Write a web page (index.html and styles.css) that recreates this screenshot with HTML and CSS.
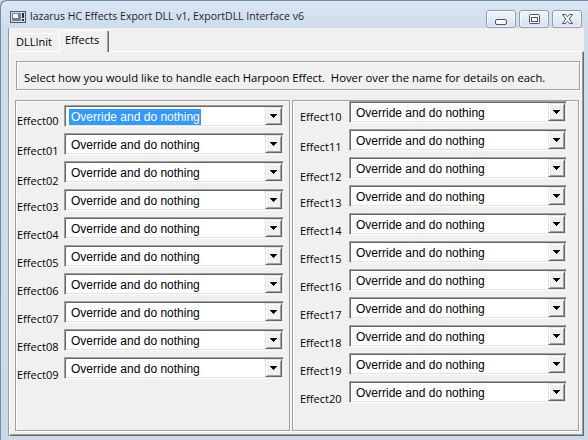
FILE: index.html
```html
<!DOCTYPE html>
<html>
<head>
<meta charset="utf-8">
<link rel="stylesheet" href="styles.css">
</head>
<body>
<div class="window">
  <div class="titlebar">
    <svg class="appicon" width="16" height="12" viewBox="0 0 16 12">
      <rect x="0.5" y="0.5" width="15" height="11" fill="#d7dee6" stroke="#4d5866"/>
      <rect x="2" y="2" width="9" height="8" fill="#6d8297"/>
      <rect x="3" y="3" width="5" height="4" fill="#f4f6f8"/>
      <rect x="12" y="2" width="2" height="5" fill="#27313c"/>
      <rect x="12" y="8" width="2" height="2" fill="#27313c"/>
    </svg>
    <span class="title">lazarus HC Effects Export DLL v1, ExportDLL Interface v6</span>
    <div class="capbtns">
      <div class="capbtn">
        <svg width="12" height="6" viewBox="0 0 12 6"><rect x="0.5" y="0.5" width="11" height="5" rx="1.5" fill="#fff" stroke="#45566b"/></svg>
      </div>
      <div class="capbtn">
        <svg width="11" height="10" viewBox="0 0 11 10"><rect x="0.5" y="0.5" width="10" height="9" rx="1" fill="#fff" stroke="#45566b"/><rect x="2.5" y="3.5" width="6" height="4" fill="#fff" stroke="#45566b"/></svg>
      </div>
      <div class="capbtn">
        <svg width="11" height="10" viewBox="0 0 11 10"><path d="M0.5 0.5h3l2 2.2 2-2.2h3l-3.3 4.5 3.3 4.5h-3l-2-2.2-2 2.2h-3l3.3-4.5z" fill="#fff" stroke="#45566b" stroke-linejoin="round"/></svg>
      </div>
    </div>
  </div>
  <div class="client">
    <div class="tabs">
      <div class="tab">DLLInit</div>
      <div class="tab active">Effects</div>
    </div>
    <div class="page">
      <div class="info">Select how you would like to handle each Harpoon Effect.&nbsp; Hover over the name for details on each.</div>
      <div class="groups">
        <div class="group gleft">
          <div class="row"><span class="lbl hi">Effect00</span><div class="combo"><span class="val"><span class="txt sel">Override and do nothing</span></span><span class="dd"><svg width="7" height="4" viewBox="0 0 7 4"><path d="M0 0h7v1h-7zM1 1h5v1h-5zM2 2h3v1h-3zM3 3h1v1h-1z"/></svg></span></div></div>
          <div class="row"><span class="lbl">Effect01</span><div class="combo"><span class="val"><span class="txt">Override and do nothing</span></span><span class="dd"><svg width="7" height="4" viewBox="0 0 7 4"><path d="M0 0h7v1h-7zM1 1h5v1h-5zM2 2h3v1h-3zM3 3h1v1h-1z"/></svg></span></div></div>
          <div class="row"><span class="lbl lo">Effect02</span><div class="combo"><span class="val"><span class="txt">Override and do nothing</span></span><span class="dd"><svg width="7" height="4" viewBox="0 0 7 4"><path d="M0 0h7v1h-7zM1 1h5v1h-5zM2 2h3v1h-3zM3 3h1v1h-1z"/></svg></span></div></div>
          <div class="row"><span class="lbl">Effect03</span><div class="combo"><span class="val"><span class="txt">Override and do nothing</span></span><span class="dd"><svg width="7" height="4" viewBox="0 0 7 4"><path d="M0 0h7v1h-7zM1 1h5v1h-5zM2 2h3v1h-3zM3 3h1v1h-1z"/></svg></span></div></div>
          <div class="row"><span class="lbl">Effect04</span><div class="combo"><span class="val"><span class="txt">Override and do nothing</span></span><span class="dd"><svg width="7" height="4" viewBox="0 0 7 4"><path d="M0 0h7v1h-7zM1 1h5v1h-5zM2 2h3v1h-3zM3 3h1v1h-1z"/></svg></span></div></div>
          <div class="row"><span class="lbl">Effect05</span><div class="combo"><span class="val"><span class="txt">Override and do nothing</span></span><span class="dd"><svg width="7" height="4" viewBox="0 0 7 4"><path d="M0 0h7v1h-7zM1 1h5v1h-5zM2 2h3v1h-3zM3 3h1v1h-1z"/></svg></span></div></div>
          <div class="row"><span class="lbl">Effect06</span><div class="combo"><span class="val"><span class="txt">Override and do nothing</span></span><span class="dd"><svg width="7" height="4" viewBox="0 0 7 4"><path d="M0 0h7v1h-7zM1 1h5v1h-5zM2 2h3v1h-3zM3 3h1v1h-1z"/></svg></span></div></div>
          <div class="row"><span class="lbl">Effect07</span><div class="combo"><span class="val"><span class="txt">Override and do nothing</span></span><span class="dd"><svg width="7" height="4" viewBox="0 0 7 4"><path d="M0 0h7v1h-7zM1 1h5v1h-5zM2 2h3v1h-3zM3 3h1v1h-1z"/></svg></span></div></div>
          <div class="row"><span class="lbl">Effect08</span><div class="combo"><span class="val"><span class="txt">Override and do nothing</span></span><span class="dd"><svg width="7" height="4" viewBox="0 0 7 4"><path d="M0 0h7v1h-7zM1 1h5v1h-5zM2 2h3v1h-3zM3 3h1v1h-1z"/></svg></span></div></div>
          <div class="row"><span class="lbl">Effect09</span><div class="combo"><span class="val"><span class="txt">Override and do nothing</span></span><span class="dd"><svg width="7" height="4" viewBox="0 0 7 4"><path d="M0 0h7v1h-7zM1 1h5v1h-5zM2 2h3v1h-3zM3 3h1v1h-1z"/></svg></span></div></div>
        </div>
        <div class="group gright">
          <div class="row"><span class="lbl hi">Effect10</span><div class="combo"><span class="val"><span class="txt">Override and do nothing</span></span><span class="dd"><svg width="7" height="4" viewBox="0 0 7 4"><path d="M0 0h7v1h-7zM1 1h5v1h-5zM2 2h3v1h-3zM3 3h1v1h-1z"/></svg></span></div></div>
          <div class="row"><span class="lbl">Effect11</span><div class="combo"><span class="val"><span class="txt">Override and do nothing</span></span><span class="dd"><svg width="7" height="4" viewBox="0 0 7 4"><path d="M0 0h7v1h-7zM1 1h5v1h-5zM2 2h3v1h-3zM3 3h1v1h-1z"/></svg></span></div></div>
          <div class="row"><span class="lbl lo">Effect12</span><div class="combo"><span class="val"><span class="txt">Override and do nothing</span></span><span class="dd"><svg width="7" height="4" viewBox="0 0 7 4"><path d="M0 0h7v1h-7zM1 1h5v1h-5zM2 2h3v1h-3zM3 3h1v1h-1z"/></svg></span></div></div>
          <div class="row"><span class="lbl">Effect13</span><div class="combo"><span class="val"><span class="txt">Override and do nothing</span></span><span class="dd"><svg width="7" height="4" viewBox="0 0 7 4"><path d="M0 0h7v1h-7zM1 1h5v1h-5zM2 2h3v1h-3zM3 3h1v1h-1z"/></svg></span></div></div>
          <div class="row"><span class="lbl">Effect14</span><div class="combo"><span class="val"><span class="txt">Override and do nothing</span></span><span class="dd"><svg width="7" height="4" viewBox="0 0 7 4"><path d="M0 0h7v1h-7zM1 1h5v1h-5zM2 2h3v1h-3zM3 3h1v1h-1z"/></svg></span></div></div>
          <div class="row"><span class="lbl">Effect15</span><div class="combo"><span class="val"><span class="txt">Override and do nothing</span></span><span class="dd"><svg width="7" height="4" viewBox="0 0 7 4"><path d="M0 0h7v1h-7zM1 1h5v1h-5zM2 2h3v1h-3zM3 3h1v1h-1z"/></svg></span></div></div>
          <div class="row"><span class="lbl">Effect16</span><div class="combo"><span class="val"><span class="txt">Override and do nothing</span></span><span class="dd"><svg width="7" height="4" viewBox="0 0 7 4"><path d="M0 0h7v1h-7zM1 1h5v1h-5zM2 2h3v1h-3zM3 3h1v1h-1z"/></svg></span></div></div>
          <div class="row"><span class="lbl">Effect17</span><div class="combo"><span class="val"><span class="txt">Override and do nothing</span></span><span class="dd"><svg width="7" height="4" viewBox="0 0 7 4"><path d="M0 0h7v1h-7zM1 1h5v1h-5zM2 2h3v1h-3zM3 3h1v1h-1z"/></svg></span></div></div>
          <div class="row"><span class="lbl">Effect18</span><div class="combo"><span class="val"><span class="txt">Override and do nothing</span></span><span class="dd"><svg width="7" height="4" viewBox="0 0 7 4"><path d="M0 0h7v1h-7zM1 1h5v1h-5zM2 2h3v1h-3zM3 3h1v1h-1z"/></svg></span></div></div>
          <div class="row"><span class="lbl">Effect19</span><div class="combo"><span class="val"><span class="txt">Override and do nothing</span></span><span class="dd"><svg width="7" height="4" viewBox="0 0 7 4"><path d="M0 0h7v1h-7zM1 1h5v1h-5zM2 2h3v1h-3zM3 3h1v1h-1z"/></svg></span></div></div>
          <div class="row"><span class="lbl">Effect20</span><div class="combo"><span class="val"><span class="txt">Override and do nothing</span></span><span class="dd"><svg width="7" height="4" viewBox="0 0 7 4"><path d="M0 0h7v1h-7zM1 1h5v1h-5zM2 2h3v1h-3zM3 3h1v1h-1z"/></svg></span></div></div>
        </div>
      </div>
    </div>
  </div>
</div>
</body>
</html>
```

FILE: styles.css
```css
html, body {
  margin: 0;
  padding: 0;
  background: #cbd9ea;
}

.window {
  width: 588px;
  height: 440px;
  display: flex;
  flex-direction: column;
  overflow: hidden;
  background: linear-gradient(#dbe6f3, #cedcee 28px, #cbd9ea);
  border-top-left-radius: 6px;
  box-shadow: inset 1px 1px 0 #6f8ea3;
  font-family: "Open Sans", "Noto Sans", sans-serif;
  color: #000;
}

/* ---------- title bar ---------- */
.titlebar {
  height: 28px;
  flex: none;
  display: flex;
  align-items: flex-start;
  padding-left: 10px;
}

.appicon {
  margin-top: 11px;
  flex: none;
}

.title {
  margin-left: 4px;
  margin-top: 9px;
  font-size: 10.5px;
  line-height: 15px;
  color: #1b1f26;
  white-space: nowrap;
}

.capbtns {
  margin-left: auto;
  margin-right: 6px;
  margin-top: 10px;
  display: flex;
  gap: 3px;
}

.capbtn {
  width: 30px;
  height: 18px;
  box-sizing: border-box;
  border: 1px solid #8a9cb3;
  border-radius: 3px;
  background: linear-gradient(#f3f6fa, #e4ebf4 50%, #d6e0ec);
  box-shadow: inset 0 0 0 1px rgba(255, 255, 255, 0.6);
  display: flex;
  align-items: center;
  justify-content: center;
}

.capbtn:first-child svg {
  margin-top: 5px;
}

/* ---------- client ---------- */
.client {
  flex: 1;
  margin: 0 4px 4px 8px;
  background: #f0f0f0;
  border-left: 1px solid #8f9db0;
  display: flex;
  flex-direction: column;
  min-height: 0;
}

.tabs {
  height: 23px;
  flex: none;
  display: flex;
  align-items: flex-end;
  padding-left: 1px;
}

.tab {
  box-sizing: border-box;
  height: 18px;
  width: 49px;
  padding-left: 5px;
  border-top: 1px solid #fff;
  border-left: 1px solid #fff;
  border-top-left-radius: 2px;
  font-size: 11px;
  line-height: 16px;
  white-space: nowrap;
}

.tab.active {
  position: relative;
  z-index: 1;
  height: 22px;
  width: 50px;
  margin-bottom: -1px;
  background: #f0f0f0;
  border-right: 1px solid #696969;
  box-shadow: inset -1px 0 0 #a0a0a0;
  border-top-right-radius: 2px;
  line-height: 17px;
}

.page {
  flex: 1;
  min-height: 0;
  display: flex;
  flex-direction: column;
  border-top: 1px solid #fff;
  border-left: 1px solid #fff;
  border-right: 1px solid #696969;
  border-bottom: 1px solid #696969;
  box-shadow: inset -1px -1px 0 #a0a0a0;
  padding: 9px 3px 4px 5px;
}

.info {
  flex: none;
  box-sizing: border-box;
  height: 29px;
  margin-left: 1px;
  border: 1px solid #a0a0a0;
  box-shadow: inset 1px 1px 0 #fff, 1px 1px 0 #fff;
  font-size: 11.3px;
  line-height: 15px;
  padding: 8px 0 0 7px;
  white-space: nowrap;
}

.groups {
  flex: 1;
  min-height: 0;
  margin-top: 10px;
  display: flex;
  gap: 2px;
  margin-right: 1px;
}

.group {
  box-sizing: border-box;
  border: 1px solid #a0a0a0;
  box-shadow: inset 1px 1px 0 #fff, 1px 1px 0 #fff;
  display: flex;
  flex-direction: column;
}

.gleft {
  width: 275px;
  padding: 4px 0 0 1px;
}

.gright {
  flex: 1;
  padding: 0 0 0 7px;
}

.row {
  height: 28px;
  flex: none;
  display: flex;
  align-items: flex-start;
}

.lbl {
  box-sizing: border-box;
  height: 22px;
  margin-top: 3px;
  display: flex;
  align-items: flex-end;
  font-size: 11px;
  line-height: 15px;
  white-space: nowrap;
}

.gleft .lbl { width: 47px; }
.gright .lbl { width: 49px; }

.lbl.lo { margin-top: 5px; }
.lbl.hi { margin-top: 1px; }

.combo {
  box-sizing: border-box;
  height: 22px;
  border: 1px solid;
  border-color: #a0a0a0 #fff #fff #a0a0a0;
  box-shadow: inset 1px 1px 0 #696969, inset -1px -1px 0 #e3e3e3;
  background: #fff;
  padding: 1px;
  display: flex;
  align-items: stretch;
  font-family: "Liberation Sans", Arial, sans-serif;
  font-size: 12px;
}

.gleft .combo { width: 220px; }
.gright .combo { width: 218px; }

.val {
  flex: 1;
  display: flex;
  align-items: center;
  padding-left: 3px;
  padding-top: 1px;
}

.txt {
  padding: 0 1px 0 2px;
  line-height: 16px;
  color: #000;
}

.txt.sel {
  background: #3399ff;
  color: #fff;
}

.dd {
  box-sizing: border-box;
  width: 17px;
  background: #f0f0f0;
  border: 1px solid;
  border-color: #e3e3e3 #696969 #696969 #e3e3e3;
  box-shadow: inset 1px 1px 0 #fff, inset -1px -1px 0 #a0a0a0;
  display: flex;
  align-items: center;
  justify-content: center;
}

.dd svg {
  fill: #000;
}
```
